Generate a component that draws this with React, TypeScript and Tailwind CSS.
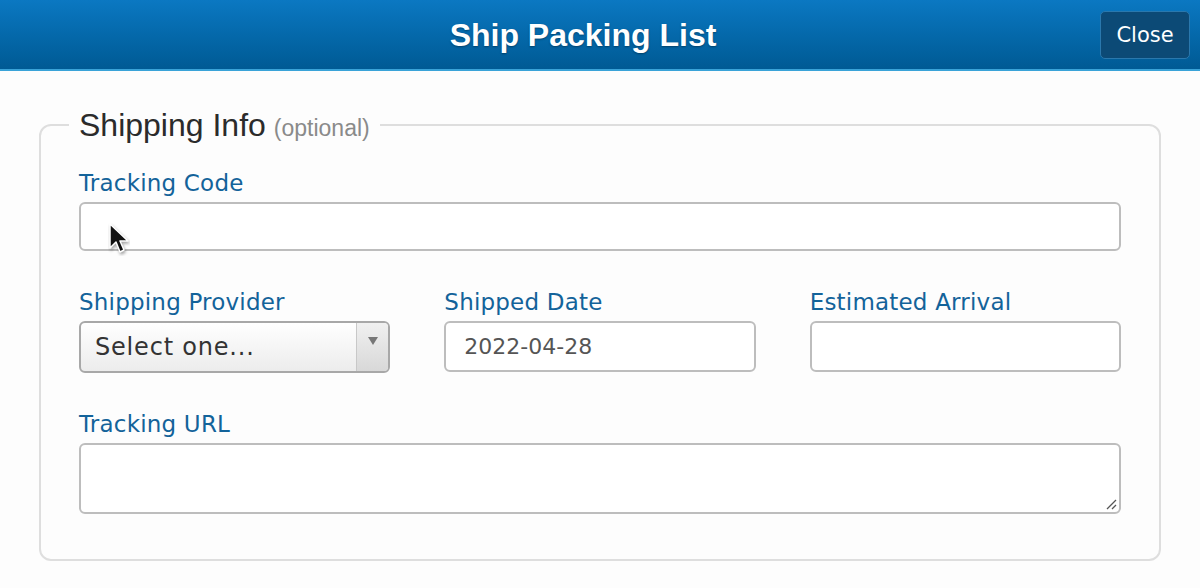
import React from 'react';

const labelCls = "block text-[23px] leading-none tracking-[0.2px] text-[#13639a] font-['DejaVu_Sans',sans-serif]";
const boxCls = 'w-full rounded-[6px] border-2 border-[#bdbdbd] bg-white';

const Field = ({ label, children }: { label: string; children: React.ReactNode }) => {
  return (
    <div className="flex flex-col gap-[7px]">
      <label className={labelCls}>{label}</label>
      {children}
    </div>
  );
};

const Cursor = () => (
  <svg className="absolute left-[108px] top-[222px]" width="22" height="34" viewBox="0 0 22 34">
    <path
      d="M2 2 L2 26 L8 20 L12 30 L16 28 L12 19 L20 19 Z"
      fill="#111"
      stroke="#fff"
      strokeWidth="1.5"
      strokeLinejoin="round"
      style={{ filter: 'drop-shadow(1px 2px 1.5px rgba(0,0,0,0.35))' }}
    />
  </svg>
);

const App = () => {
  return (
    <div className="relative h-[588px] w-[1200px] overflow-hidden bg-[#fdfdfd]">
      <header className="relative flex h-[71px] items-center justify-center border-b-2 border-[#3aa3d8] bg-gradient-to-b from-[#0b78c2] to-[#005a94] pr-[34px]">
        <h1 className="text-[32px] font-bold text-white font-['Liberation_Sans',Arial,sans-serif] [text-shadow:0_1px_2px_rgba(0,0,0,0.35)]">
          Ship Packing List
        </h1>
        <button className="absolute right-[10px] top-[11px] h-[48px] w-[90px] rounded-[5px] border border-[#2a78ad] bg-[#0c4a76] pt-[2px] text-[21px] text-white font-['DejaVu_Sans',sans-serif]">
          Close
        </button>
      </header>

      <div className="px-[39px] pt-[38px]">
        <fieldset className="h-[452px] rounded-[12px] border-2 border-[#dedede] px-[38px] pb-0">
          <legend className="ml-[-10px] px-[10px] font-['Liberation_Sans',Arial,sans-serif] leading-none">
            <span className="text-[32px] text-[#2b2b2b]">Shipping Info</span>
            <span className="ml-[8px] text-[23px] text-[#8a8a8a]">(optional)</span>
          </legend>

          <div className="mt-[31px] flex flex-col gap-[40px]">
            <Field label="Tracking Code">
              <div className={`${boxCls} h-[49px]`} />
            </Field>

            <div className="grid grid-cols-3 gap-[54px]">
              <Field label="Shipping Provider">
                <div className="flex h-[52px] overflow-hidden rounded-[6px] border-2 border-[#a8a8a8] bg-gradient-to-b from-white to-[#ececec]">
                  <span className="flex flex-1 items-center pl-[14px] text-[24px] tracking-[0.8px] text-[#333] font-['DejaVu_Sans',sans-serif]">
                    Select one...
                  </span>
                  <span className="flex w-[32px] items-start justify-center border-l border-[#c8c8c8] bg-gradient-to-b from-[#f0f0f0] to-[#d8d8d8] pt-[14px]">
                    <svg width="10" height="8" viewBox="0 0 10 8">
                      <path d="M0 0 L10 0 L5 8 Z" fill="#777" />
                    </svg>
                  </span>
                </div>
              </Field>
              <Field label="Shipped Date">
                <div className={`${boxCls} flex h-[51px] items-center pl-[18px] text-[22px] text-[#555] font-['DejaVu_Sans',sans-serif]`}>
                  2022-04-28
                </div>
              </Field>
              <Field label="Estimated Arrival">
                <div className={`${boxCls} h-[51px]`} />
              </Field>
            </div>

            <Field label="Tracking URL">
              <div className={`${boxCls} relative h-[71px]`}>
                <svg className="absolute bottom-[2px] right-[2px]" width="12" height="12" viewBox="0 0 12 12">
                  <path d="M11 2 L2 11 M11 7 L7 11" stroke="#555" strokeWidth="1.3" />
                </svg>
              </div>
            </Field>
          </div>
        </fieldset>
      </div>

      <Cursor />
    </div>
  );
};

export default App;
